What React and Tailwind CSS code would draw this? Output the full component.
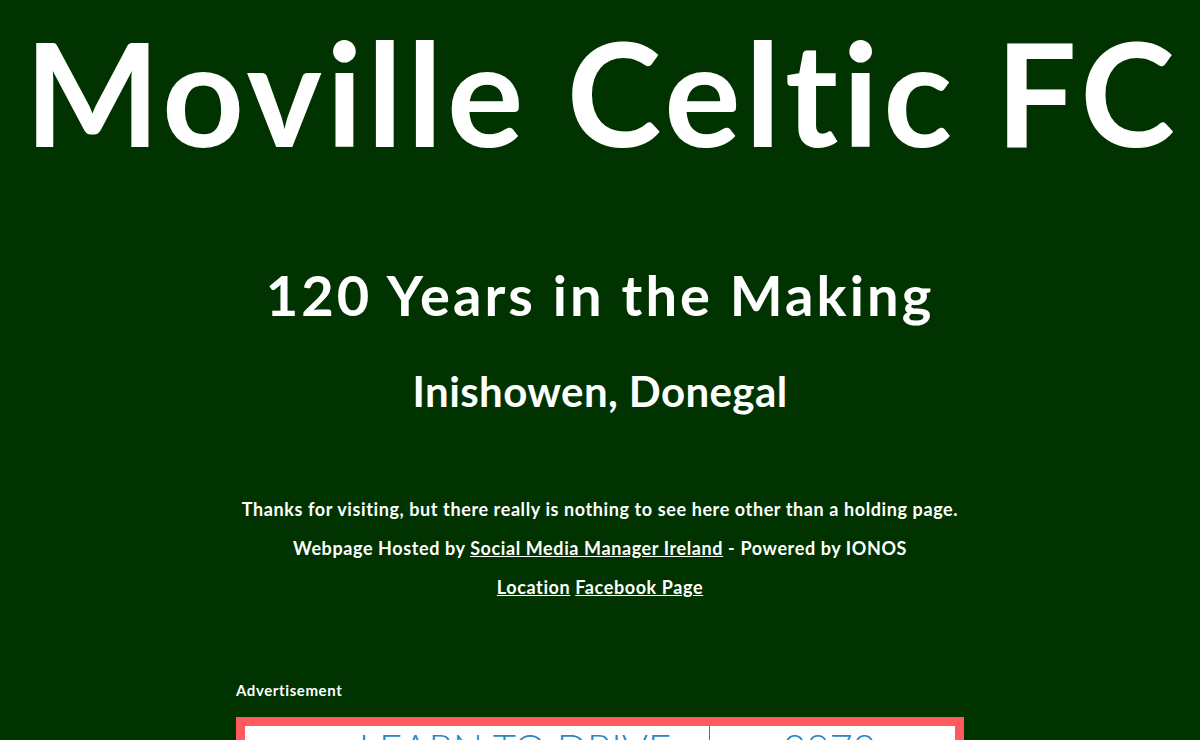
export default function App() {
  const f = { fontFamily: "Lato, 'Noto Sans', sans-serif" };
  return (
    <div className="min-h-[740px] bg-[#003300] text-white overflow-hidden" style={f}>
      <div className="h-[740px] overflow-hidden">
        <h1 className="text-center font-bold text-[143px] leading-[184px] tracking-[4.4px] whitespace-nowrap pl-[4px]">Moville Celtic FC</h1>
        <h2 className="mt-[79px] text-center font-bold text-[56px] leading-[64px] tracking-[3.1px]">120 Years in the Making</h2>
        <h3 className="mt-[40px] text-center font-bold text-[42px] leading-[48px] tracking-[0.4px]">Inishowen, Donegal</h3>
        <div className="mt-[75px] text-center font-bold text-[18px] leading-[39px] tracking-[0.6px]">
          <p>Thanks for visiting, but there really is nothing to see here other than a holding page.</p>
          <p>Webpage Hosted by <a className="underline">Social Media Manager Ireland</a> - Powered by IONOS</p>
          <p><a className="underline">Location</a> <a className="underline">Facebook Page</a></p>
        </div>
        <div className="w-[728px] mx-auto mt-[72px]">
          <div className="text-[15px] font-bold tracking-[0.6px]">Advertisement</div>
          <div className="mt-[15px] border-[9px] border-[#ff5a5f] bg-white flex h-[90px]">
            <div className="w-[465px] border-r border-[#2e7fb5] text-center text-[#2a86c2] text-[40px] font-light leading-none pt-[2px] pl-[76px]">LEARN TO DRIVE</div>
            <div className="flex-1 text-center text-[#2a86c2] text-[40px] font-light leading-none pt-[2px] pr-[6px]">0870</div>
          </div>
        </div>
      </div>
    </div>
  );
}
